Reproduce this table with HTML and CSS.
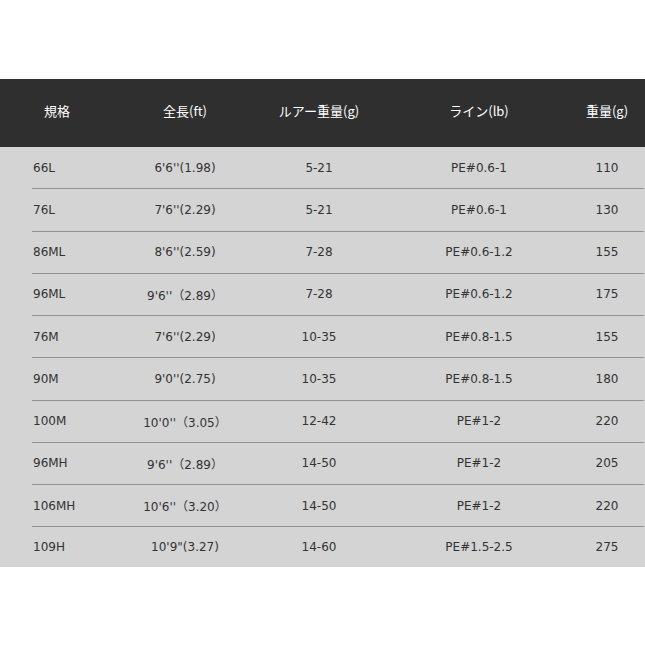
FILE: index.html
```html
<!DOCTYPE html>
<html lang="ja">
<head>
<meta charset="utf-8">
<title>Spec table</title>
<link rel="stylesheet" href="styles.css">
</head>
<body>
<div class="spec">
  <div class="head">
    <div class="row">
      <div class="c c1">規格</div>
      <div class="c">全長(ft)</div>
      <div class="c">ルアー重量(g)</div>
      <div class="c">ライン(lb)</div>
      <div class="c">重量(g)</div>
    </div>
  </div>
  <div class="body">
    <div class="row"><div class="c c1">66L</div><div class="c">6'6''(1.98)</div><div class="c">5-21</div><div class="c">PE#0.6-1</div><div class="c">110</div></div>
    <div class="row"><div class="c c1">76L</div><div class="c">7'6''(2.29)</div><div class="c">5-21</div><div class="c">PE#0.6-1</div><div class="c">130</div></div>
    <div class="row"><div class="c c1">86ML</div><div class="c">8'6''(2.59)</div><div class="c">7-28</div><div class="c">PE#0.6-1.2</div><div class="c">155</div></div>
    <div class="row"><div class="c c1">96ML</div><div class="c">9'6''（2.89）</div><div class="c">7-28</div><div class="c">PE#0.6-1.2</div><div class="c">175</div></div>
    <div class="row"><div class="c c1">76M</div><div class="c">7'6''(2.29)</div><div class="c">10-35</div><div class="c">PE#0.8-1.5</div><div class="c">155</div></div>
    <div class="row"><div class="c c1">90M</div><div class="c">9'0''(2.75)</div><div class="c">10-35</div><div class="c">PE#0.8-1.5</div><div class="c">180</div></div>
    <div class="row"><div class="c c1">100M</div><div class="c">10'0''（3.05）</div><div class="c">12-42</div><div class="c">PE#1-2</div><div class="c">220</div></div>
    <div class="row"><div class="c c1">96MH</div><div class="c">9'6''（2.89）</div><div class="c">14-50</div><div class="c">PE#1-2</div><div class="c">205</div></div>
    <div class="row"><div class="c c1">106MH</div><div class="c">10'6''（3.20）</div><div class="c">14-50</div><div class="c">PE#1-2</div><div class="c">220</div></div>
    <div class="row"><div class="c c1">109H</div><div class="c">10'9"(3.27)</div><div class="c">14-60</div><div class="c">PE#1.5-2.5</div><div class="c">275</div></div>
  </div>
</div>
</body>
</html>
```

FILE: styles.css
```css
html, body {
  margin: 0;
  padding: 0;
  background: #ffffff;
}
body {
  font-family: "DejaVu Sans", "Noto Sans CJK JP", sans-serif;
}
.spec {
  margin-top: 79px;
}
.row {
  display: grid;
  grid-template-columns: 88px 130px 138px 182px 74px;
  align-items: center;
  margin-left: 32px;
  width: 612px;
}
.c {
  text-align: center;
  white-space: nowrap;
}
.c1 {
  text-align: left;
}
.head {
  background: #2f2f2f;
}
.head .row {
  height: 62px;
  padding-bottom: 6px;
  color: #ffffff;
  font-family: "Noto Sans CJK JP", sans-serif;
  font-size: 13px;
}
.head .c1 {
  padding-left: 12px;
}
.body {
  background: #d4d4d4;
}
.body .row {
  height: 41.25px;
  border-bottom: 1px solid #929292;
  color: #333333;
  font-size: 12px;
}
.body .c1 {
  padding-left: 1px;
}
.body .row:last-child {
  height: 40px;
  border-bottom: none;
}
```
